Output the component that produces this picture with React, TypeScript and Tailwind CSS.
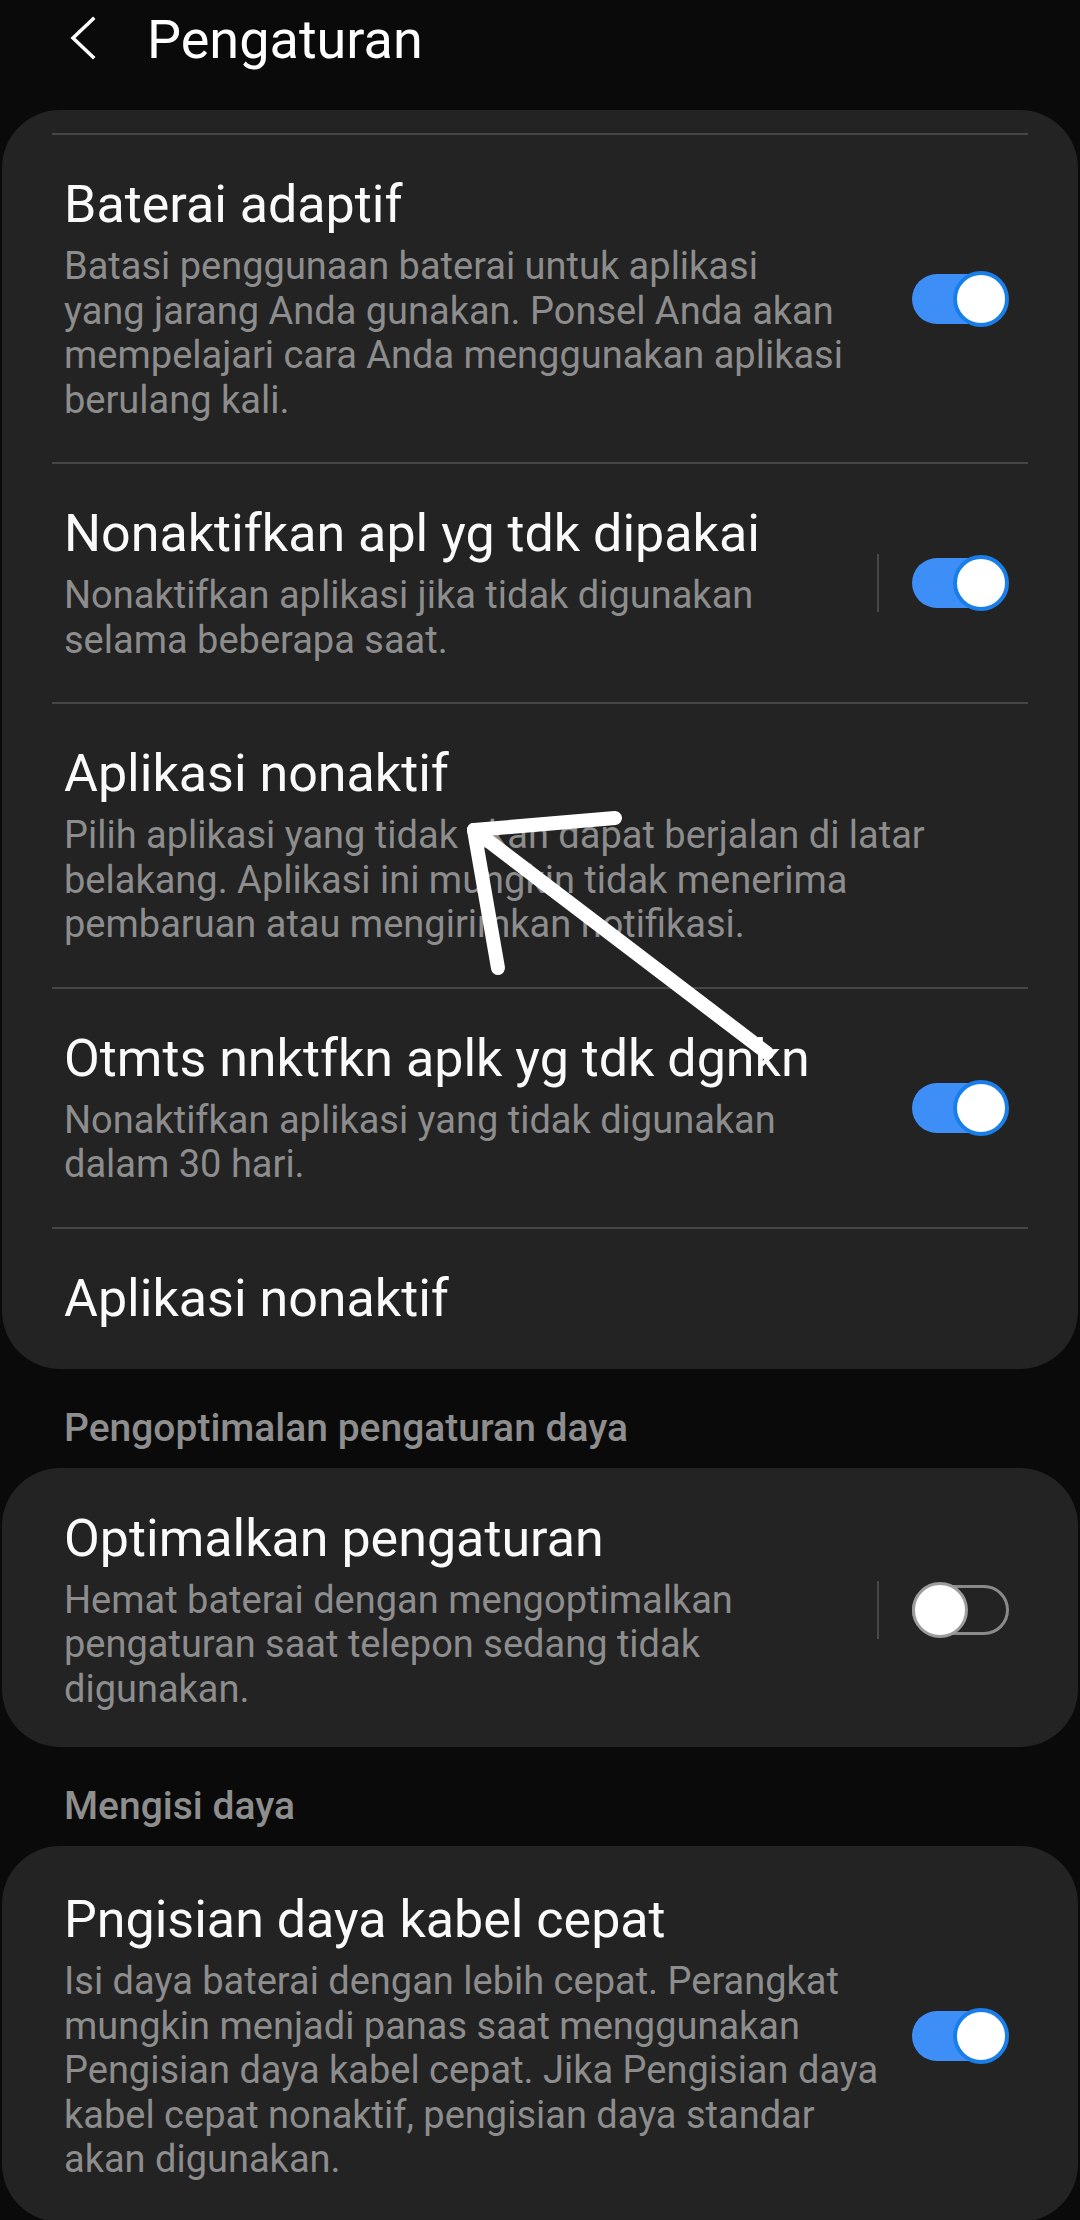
import React from "react";

function Toggle({ on }: { on: boolean }) {
  if (on) {
    return (
      <div className="relative w-[97px] h-[56px] shrink-0">
        <div className="absolute left-0 right-[4px] top-[3px] h-[50px] rounded-full bg-[#3e8ef7]" />
        <div className="absolute right-0 top-0 w-[56px] h-[56px] rounded-full bg-white border-[4px] border-[#1a7ee9]" />
      </div>
    );
  }
  return (
    <div className="relative w-[97px] h-[56px] shrink-0">
      <div className="absolute left-0 right-0 top-[3px] h-[50px] rounded-full border-[3px] border-[#8a8a8a]" />
      <div className="absolute left-0 top-0 w-[56px] h-[56px] rounded-full bg-white border-[3px] border-[#9c9c9c]" />
    </div>
  );
}

function Divider() {
  return <div className="h-[2px] bg-[#464646] mx-[50px]" />;
}

type ItemProps = {
  title: string;
  lines?: string[];
  toggle?: "on" | "off";
  sep?: boolean;
  pt?: string;
  pb?: string;
};

function Item({ title, lines, toggle, sep, pt, pb }: ItemProps) {
  return (
    <div className={`flex items-center pl-[62px] pr-[69px] ${pt ?? "pt-[40px]"} ${pb ?? "pb-[40px]"}`}>
      <div className="flex-1 min-w-0">
        <div className="text-[52px] leading-[60px] text-[#fafafa] whitespace-nowrap">{title}</div>
        {lines && (
          <div className="mt-[9px] text-[38px] leading-[44.5px] text-[#8d8d8d] whitespace-nowrap">
            {lines.map((l, i) => (
              <div key={i}>{l}</div>
            ))}
          </div>
        )}
      </div>
      {sep && <div className="w-[2px] h-[58px] bg-[#484848] mr-[33px] shrink-0" />}
      {toggle && <Toggle on={toggle === "on"} />}
    </div>
  );
}

function SectionHeader({ text }: { text: string }) {
  return (
    <div className="pl-[64px] pt-[39px] pb-[20px] text-[39px] leading-[40px] font-medium text-[#8e8e8e]">
      {text}
    </div>
  );
}

export default function App() {
  return (
    <div className="relative w-[1080px] h-[2220px] overflow-hidden bg-[#0a0a0a] font-['Roboto','Noto_Sans',sans-serif]">
      {/* Header */}
      <div className="h-[80px] flex items-center">
        <svg width="40" height="60" viewBox="0 0 40 60" className="ml-[62px] mt-[-6px]">
          <polyline points="31,12 11,31 31,50" fill="none" stroke="#ffffff" strokeWidth="3.5" strokeLinecap="square" />
        </svg>
        <div className="ml-[45px] text-[54px] leading-[60px] text-white">Pengaturan</div>
      </div>

      {/* Card 1 */}
      <div className="mt-[30px] mx-[2px] rounded-[58px] bg-[#232323] pt-[23px]">
        <Divider />
        <Item
          title="Baterai adaptif"
          lines={[
            "Batasi penggunaan baterai untuk aplikasi",
            "yang jarang Anda gunakan. Ponsel Anda akan",
            "mempelajari cara Anda menggunakan aplikasi",
            "berulang kali.",
          ]}
          toggle="on"
        />
        <Divider />
        <Item
          title="Nonaktifkan apl yg tdk dipakai"
          lines={["Nonaktifkan aplikasi jika tidak digunakan", "selama beberapa saat."]}
          toggle="on"
          sep
        />
        <Divider />
        <Item
          title="Aplikasi nonaktif"
          lines={[
            "Pilih aplikasi yang tidak akan dapat berjalan di latar",
            "belakang. Aplikasi ini mungkin tidak menerima",
            "pembaruan atau mengirimkan notifikasi.",
          ]}
        />
        <Divider />
        <Item
          title="Otmts nnktfkn aplk yg tdk dgnkn"
          lines={["Nonaktifkan aplikasi yang tidak digunakan", "dalam 30 hari."]}
          toggle="on"
        />
        <Divider />
        <Item title="Aplikasi nonaktif" />
      </div>

      <SectionHeader text="Pengoptimalan pengaturan daya" />

      {/* Card 2 */}
      <div className="mx-[2px] rounded-[58px] bg-[#232323]">
        <Item
          title="Optimalkan pengaturan"
          lines={[
            "Hemat baterai dengan mengoptimalkan",
            "pengaturan saat telepon sedang tidak",
            "digunakan.",
          ]}
          toggle="off"
          sep
          pt="pt-[41px]"
          pb="pb-[36px]"
        />
      </div>

      <SectionHeader text="Mengisi daya" />

      {/* Card 3 */}
      <div className="mx-[2px] rounded-[58px] bg-[#232323]">
        <Item
          title="Pngisian daya kabel cepat"
          lines={[
            "Isi daya baterai dengan lebih cepat. Perangkat",
            "mungkin menjadi panas saat menggunakan",
            "Pengisian daya kabel cepat. Jika Pengisian daya",
            "kabel cepat nonaktif, pengisian daya standar",
            "akan digunakan.",
          ]}
          toggle="on"
          pt="pt-[44px]"
        />
      </div>

      {/* Hand-drawn arrow annotation */}
      <svg
        className="absolute left-0 top-0 pointer-events-none"
        width="1080"
        height="2220"
        viewBox="0 0 1080 2220"
      >
        <g stroke="#ffffff" strokeWidth="14" strokeLinecap="round" strokeLinejoin="round" fill="none">
          <line x1="767" y1="1053" x2="474" y2="830" />
          <line x1="474" y1="830" x2="615" y2="818" />
          <line x1="474" y1="830" x2="498" y2="968" />
        </g>
      </svg>
    </div>
  );
}
